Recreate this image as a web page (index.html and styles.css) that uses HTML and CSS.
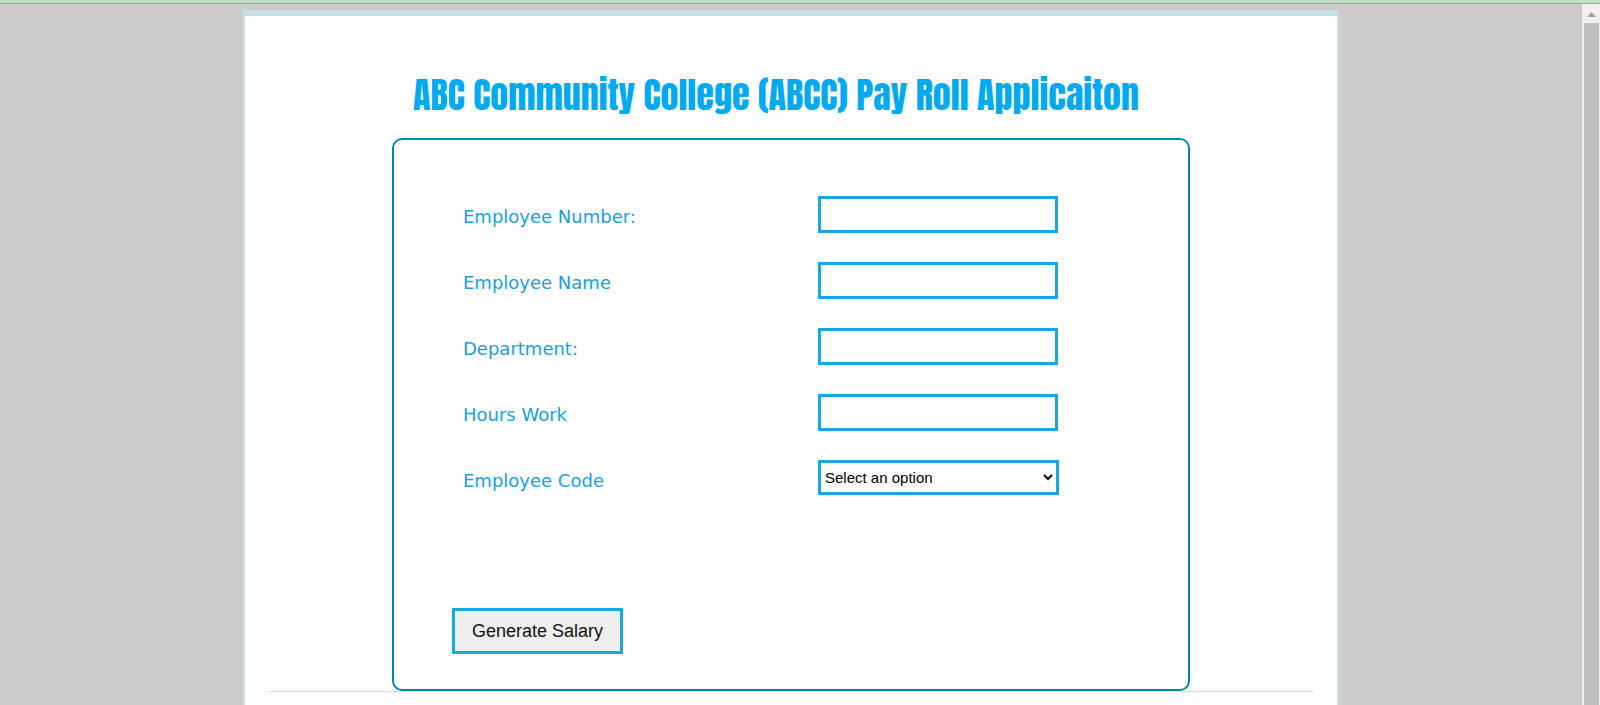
FILE: index.html
```html
<!DOCTYPE html>
<html lang="en">
<head>
<meta charset="utf-8">
<title>ABCC Pay Roll</title>
<link rel="stylesheet" href="styles.css">
</head>
<body>
<div class="top-strip"></div>
<div class="viewport">
  <main class="page">
    <div class="card">
      <h1 class="title">ABC Community College (ABCC) Pay Roll Applicaiton</h1>
      <form class="payroll">
        <div class="fields">
          <label for="number">Employee Number:</label>
          <input class="control" id="number" type="text">
          <label for="name">Employee Name</label>
          <input class="control" id="name" type="text">
          <label for="department">Department:</label>
          <input class="control" id="department" type="text">
          <label for="hours">Hours Work</label>
          <input class="control" id="hours" type="text">
          <label for="code">Employee Code</label>
          <select class="control select" id="code"><option>Select an option</option></select>
        </div>
        <button class="submit" type="button">Generate Salary</button>
      </form>
      <hr class="divider">
    </div>
  </main>
  <div class="scrollbar">
    <svg class="arrow" viewBox="0 0 18 19"><path d="M5 13 9.500 8l4.500 5z" fill="#a3a3a3"/></svg>
    <div class="thumb"></div>
  </div>
</div>
</body>
</html>
```
FILE: styles.css
```css
* { box-sizing: border-box; }
body {
  margin: 0;
  height: 100vh;
  overflow: hidden;
  display: flex;
  flex-direction: column;
  background: #ccc;
  font-family: "Liberation Sans", Arial, sans-serif;
}
.top-strip {
  height: 4px;
  flex: none;
  background: #c3e2c5;
  border-bottom: 1px solid #9dab9d;
}
.viewport { flex: 1; display: flex; min-height: 0; }
.page {
  flex: 1;
  display: flex;
  justify-content: center;
  padding-top: 6px;
}
.card {
  width: 100%;
  max-width: 1096px;
  padding: 56px 24px 0;
  background: #fff;
  border: 2px solid #c8dfea;
  border-top-width: 6px;
  border-bottom: 0;
}
.title {
  margin: 0;
  padding-right: 30px;
  height: 66px;
  line-height: 46px;
  text-align: center;
  white-space: nowrap;
  color: #00aaf0;
  font-family: Impact, Anton, "Liberation Sans", sans-serif;
  font-size: 36px;
  font-weight: 400;
}
.payroll {
  max-width: 798px;
  margin: 0 auto;
  padding: 56px 58px 35px;
  border: 2px solid #0387b3;
  border-radius: 10px;
}
.fields {
  display: grid;
  grid-template-columns: 355px 241px;
  row-gap: 29px;
  padding-left: 11px;
  margin-bottom: 111px;
}
.fields label {
  color: #1ba0dc;
  font: 18px/42px "DejaVu Sans", Verdana, sans-serif;
  height: 37px;
}
.control {
  width: 240px;
  height: 37px;
  border: 3px solid #17a8e0;
  border-radius: 0;
  background: #fff;
  font: 15px "Liberation Sans", Arial, sans-serif;
}
.select { width: 241px; height: 35px; color: #000; }
.submit {
  display: block;
  height: 46px;
  padding: 0 17px;
  border: 3px solid #17a8e0;
  background: #efefef;
  color: #111;
  font: 18px "Liberation Sans", Arial, sans-serif;
}
.divider {
  margin: 0;
  border: 0;
  border-top: 1px solid #cddde5;
}
.scrollbar {
  width: 18px;
  flex: none;
  display: flex;
  flex-direction: column;
  background: #f1f1f1;
}
.arrow { display: block; width: 18px; height: 19px; flex: none; }
.thumb { flex: 1; margin: 0 1px 0 2px; background: #c0c0c0; }
```
